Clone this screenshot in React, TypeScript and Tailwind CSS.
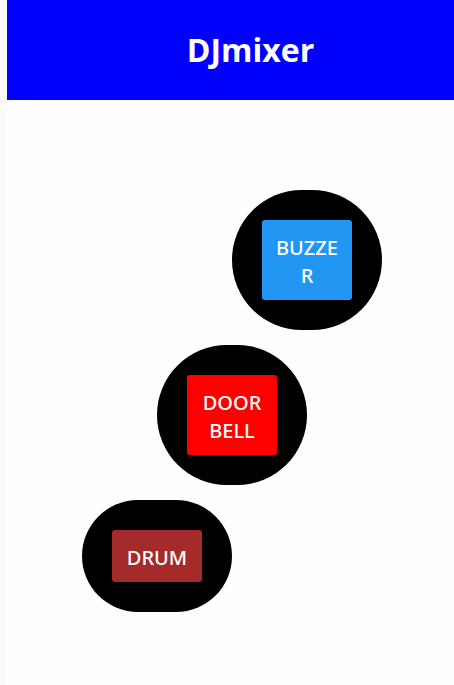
const pads = [
  { name: "BUZZER", offset: "ml-[225px]", color: "bg-[#2196f3]" },
  { name: "DOOR BELL", offset: "ml-[150px]", color: "bg-[#ff0000]" },
  { name: "DRUM", offset: "ml-[75px]", color: "bg-[#a52a2a]" },
];

export default function App() {
  return (
    <div className="min-h-screen border-l-[7px] border-[#fbfbfb] bg-[#fefefe] font-['Open_Sans','Noto_Sans',sans-serif]">
      <header className="flex h-[100px] items-center justify-center bg-[#0000ff] pl-10">
        <h1 className="text-[32px] leading-10 font-bold text-white">DJmixer</h1>
      </header>
      <main className="flex flex-col items-start gap-[15px] pt-[90px]">
        {pads.map((pad) => (
          <div key={pad.name} className={`w-[150px] rounded-[70px] bg-black p-[30px] ${pad.offset}`}>
            <button
              type="button"
              className={`block w-full rounded-[3px] px-3 pt-[14px] pb-[10px] text-center font-['Noto_Sans','Open_Sans',sans-serif] text-xl font-medium wrap-anywhere text-white ${pad.color}`}
            >
              {pad.name}
            </button>
          </div>
        ))}
      </main>
    </div>
  );
}
